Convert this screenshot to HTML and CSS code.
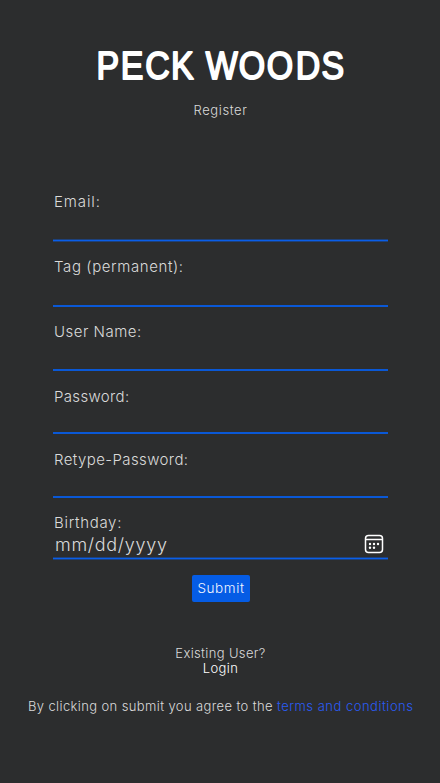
FILE: index.html
```html
<!DOCTYPE html>
<html lang="en">
<head>
<meta charset="utf-8">
<title>Peck Woods - Register</title>
<link rel="stylesheet" href="styles.css">
</head>
<body>
<header class="header">
  <svg class="logo" viewBox="0 0 260 60" role="img" aria-label="Peck Woods"><text class="logo-text" transform="scale(.88 1)" x="7.4 35 62.7 92 120 131.4 169 201 233.8 263.2" y="43">PECK WOODS</text></svg>
  <h1 class="title">Register</h1>
</header>
<form class="form">
  <div class="field soft"><span class="label email">Email:</span></div>
  <div class="field"><span class="label tag">Tag (permanent):</span></div>
  <div class="field user-field"><span class="label user">User Name:</span></div>
  <div class="field short"><span class="label password">Password:</span></div>
  <div class="field retype-field"><span class="label retype">Retype-Password:</span></div>
  <div class="field soft birthday-field">
    <span class="label birthday">Birthday:</span>
    <div class="date-row">
      <span class="date">mm/dd/yyyy</span>
      <svg class="calendar" viewBox="0 0 20 20"><rect x="1.5" y="1.5" width="17" height="17" rx="3" /><path d="M1.5 5.5h17" /><g class="dots"><circle cx="6" cy="10" r="1.2"/><circle cx="10" cy="10" r="1.2"/><circle cx="14" cy="10" r="1.2"/><circle cx="6" cy="13.7" r="1.2"/><circle cx="10" cy="13.7" r="1.2"/></g></svg>
    </div>
  </div>
  <button class="submit" type="button">Submit</button>
</form>
<footer class="footer">
  <div class="existing">Existing User?</div>
  <div class="login">Login</div>
  <p class="terms"><span class="agree">By clicking on submit you agree to the</span><a class="link">terms and conditions</a></p>
</footer>
</body>
</html>
```
FILE: styles.css
```css
* { box-sizing: border-box; }
body {
  margin: 0;
  height: 783px;
  background: #2c2d2e;
  color: #dadada;
  font: 300 15px/18px Inter, "Liberation Sans", sans-serif;
  overflow: hidden;
}
.header { height: 193px; padding-top: 36px; display: flex; flex-direction: column; align-items: center; }
.logo { width: 260px; height: 60px; overflow: visible; }
.logo-text {
  font: 400 38.5px "Liberation Sans", sans-serif;
  fill: #fff;
  stroke: #fff;
  stroke-width: 1.9px;
  stroke-linejoin: round;
}
.title { margin: 5px 0 0 1px; font-size: 13px; line-height: 18px; font-weight: 300; letter-spacing: .6px; }
.form { width: 335px; margin-left: 53px; display: flex; flex-direction: column; }
.field { height: 49px; margin-bottom: 16px; border-bottom: 2px solid #0a58d6; white-space: nowrap; }
.soft { height: 48px; margin-bottom: 17px; border-bottom: 1px solid #0a5ee8; box-shadow: 0 1px #1d417c, inset 0 -1px #1d417c; }
.user-field { height: 48px; margin-bottom: 17px; }
.short { height: 46px; margin-bottom: 17px; }
.retype-field { height: 47px; }
.birthday-field { height: 45px; margin-bottom: 16px; }
.label { display: block; padding-left: 1px; }
.email { letter-spacing: .9px; }
.tag { letter-spacing: .6px; }
.user { letter-spacing: .5px; }
.password { letter-spacing: .35px; }
.retype { letter-spacing: .4px; }
.birthday { letter-spacing: .7px; }
.date-row { display: flex; justify-content: space-between; align-items: center; height: 26px; padding: 0 4px 0 2px; }
.date { font-size: 18px; letter-spacing: .7px; }
.calendar { width: 20px; height: 20px; margin-top: -2px; fill: none; stroke: #fff; stroke-width: 1.5; }
.dots { fill: #fff; stroke: none; }
.submit {
  width: 58px;
  height: 27px;
  margin-left: 139px;
  padding: 0;
  border: 0;
  border-radius: 2px;
  background: #055ce5;
  color: #f4f7ff;
  font: 300 13.5px/27px Inter, sans-serif;
  letter-spacing: .6px;
}
.footer { padding-top: 44px; text-align: center; font-size: 13px; line-height: 15px; }
.existing { padding-left: 1px; letter-spacing: .35px; }
.login { padding-left: 1px; color: #fff; letter-spacing: .4px; }
.terms { display: flex; gap: 4px; margin: 23px 0 0 28px; white-space: nowrap; }
.agree { letter-spacing: .38px; }
.link { color: #2a5cf5; letter-spacing: .5px; }
```
